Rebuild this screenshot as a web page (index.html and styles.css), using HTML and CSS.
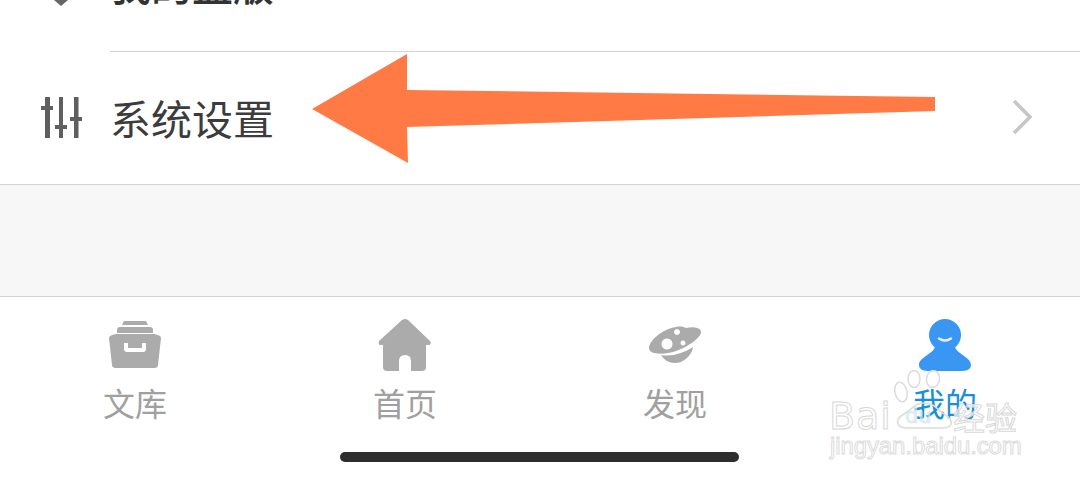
FILE: index.html
```html
<!DOCTYPE html>
<html lang="zh">
<head>
<meta charset="utf-8">
<title>系统设置</title>
<link rel="stylesheet" href="styles.css">
</head>
<body>
<div class="page">
  <main class="list">
    <div class="row row-clipped">
      <div class="row-icon"><svg class="clip-icon" width="24" height="10" viewBox="0 0 24 10"><path d="M5 0h14l-7 6z" fill="#666"/></svg></div>
      <div class="row-main row-main-top">
        <span class="row-label row-label-clipped">我的盗版</span>
      </div>
    </div>
    <div class="row row-settings">
      <div class="row-icon">
        <svg width="42" height="41" viewBox="0 0 42 41">
          <g fill="#5f5f5f">
            <rect x="4" y="0" width="5" height="41"/><rect x="0" y="9" width="12" height="4"/>
            <rect x="18" y="0" width="4" height="41"/><rect x="14" y="28" width="12" height="4"/>
            <rect x="33" y="0" width="4.500" height="41"/><rect x="29" y="20" width="12" height="4"/>
          </g>
        </svg>
      </div>
      <div class="row-main">
        <span class="row-label">系统设置</span>
        <svg class="chevron" width="22" height="36" viewBox="0 0 22 36"><path d="M3 2l16 16L3 34" fill="none" stroke="#c6c6c6" stroke-width="3.500"/></svg>
      </div>
    </div>
  </main>
  <div class="spacer"></div>
  <nav class="tabbar">
    <div class="tabs">
      <div class="tab">
        <svg width="54" height="50" viewBox="0 0 54 50"><g fill="#ababab">
          <path d="M15 4q0-2 2-2h20q2 0 2 2l1 2H14z"/>
          <path d="M9 11q0-3 3-3h30q3 0 3 3v3H9z"/>
          <path fill-rule="evenodd" d="M1 19q0-2 3-3l4-1h38l4 1q3 1 3 3l-3 27q0 3-4 3H8q-4 0-4-3zM16 24v6q0 3 3 3h16q3 0 3-3v-6h-4v5H20v-5z"/>
        </g></svg>
        <span>文库</span>
      </div>
      <div class="tab">
        <svg width="54" height="54" viewBox="0 0 54 54"><path fill="#ababab" d="M24 1q3-2 6 0l22 21q2 3-1 4h-3v22q0 4-4 4H33V42q0-6-6-6t-6 6v10H9q-4 0-4-4V26H2q-2 0-1-4z"/></svg>
        <span>首页</span>
      </div>
      <div class="tab">
        <svg width="54" height="45" viewBox="0 -7 54 45"><g fill="#ababab">
          <path fill-rule="evenodd" d="M1 22C1 15 14 3 28 1c5-1 8 0 10 1 8-2 16 0 15 5-1 5-13 14-25 18C16 29 1 29 1 22zM19 12.500a5.500 5.500 0 1 0 .01 0zM29 3a3 3 0 1 0 .01 0zM35 14.500a2.500 2.500 0 1 0 .01 0z"/>
          <path d="M13 29c11 2 23-2 32-8-1 8-9 16-18 16-6 0-11-3-14-8z"/>
        </g></svg>
        <span>发现</span>
      </div>
      <div class="tab tab-active">
        <svg width="54" height="54" viewBox="0 0 54 54">
          <circle cx="27" cy="16" r="16" fill="#3a96f3"/>
          <path fill="#3a96f3" d="M17 28C14 36 1 38 1 46c0 5 5 6 11 6h30c6 0 11-1 11-6 0-8-13-10-16-18z"/>
          <path fill="none" stroke="#e4f1ff" stroke-width="2.500" stroke-linecap="round" d="M21 19.500q6 4 12 0"/>
        </svg>
        <span>我的</span>
      </div>
    </div>
    <div class="home-indicator"></div>
  </nav>
  <svg class="arrow" width="640" height="120" viewBox="0 0 640 120"><path fill="#ff7a45" d="M2 55 97 0v36l528 7v14L97 73l1 36z"/></svg>
  <div class="watermark">
    <svg class="paw" width="62" height="60" viewBox="0 0 62 60"><g fill="none" stroke="#dcdcdc" stroke-width="1.500">
      <ellipse cx="7" cy="22" rx="6" ry="10" transform="rotate(-12 7 22)"/>
      <ellipse cx="20" cy="9" rx="6" ry="8.500"/>
      <ellipse cx="39" cy="9" rx="6.500" ry="8.500" transform="rotate(6 39 9)"/>
      <path d="M30 33c10 0 14 7 20 11 10 6 10 14-2 14H14C2 58 0 50 10 44c8-4 10-11 20-11z"/>
    </g></svg>
    <div class="wm-bai">Bai</div>
    <div class="wm-du">du</div>
    <div class="wm-cn">经验</div>
    <div class="wm-url">jingyan.baidu.com</div>
  </div>
</div>
</body>
</html>
```
FILE: styles.css
```css
* { box-sizing: border-box; }
html, body { margin: 0; padding: 0; background: #fff; }
body { font-family: "Noto Sans CJK SC", "Liberation Sans", sans-serif; }
.page { position: relative; width: 1080px; height: 483px; overflow: hidden; display: flex; flex-direction: column; background: #fff; }
.list { display: flex; flex-direction: column; border-bottom: 1px solid #d2d2d2; height: 185px; flex: none; }
.row { display: flex; }
.row-clipped { height: 52px; overflow: hidden; }
.clip-icon { display: block; margin: 0 0 0 8px; }
.row-icon { width: 110px; flex: none; padding-left: 41px; }
.row-main { flex: 1; display: flex; align-items: center; justify-content: space-between; padding-right: 47px; }
.row-main-top { border-bottom: 1px solid #d2d2d2; align-items: flex-start; }
.row-label { font-size: 41px; line-height: 48px; color: #3c3c3c; }
.row-label-clipped { margin-top: -41px; font-weight: 500; color: #333; }
.row-settings { height: 132px; align-items: center; }
.row-settings .row-main { align-self: stretch; }
.row-settings .row-icon { height: 41px; margin-top: -2px; }
.row-settings .row-label { margin-top: -3px; }
.chevron { display: block; margin-top: -2px; }
.spacer { height: 111px; background: #f7f7f7; flex: none; }
.tabbar { flex: 1; border-top: 1px solid #d2d2d2; display: flex; flex-direction: column; }
.tabs { display: grid; grid-template-columns: repeat(4, 270px); width: 1080px; height: 155px; }
.tab { display: flex; flex-direction: column; align-items: center; height: 122px; padding-top: 22px; color: #a0a0a0; font-size: 32px; line-height: 40px; position: relative; }
.tab svg { display: block; flex: none; }
.tab span { position: absolute; top: 85px; left: 0; right: 0; text-align: center; }
.tab-active { color: #1c8fd6; }
.home-indicator { width: 399px; height: 10px; border-radius: 5px; background: #2e2e2e; margin-left: 340px; }
.arrow { position: absolute; left: 310px; top: 54px; }
.watermark { position: absolute; left: 829px; top: 366px; width: 200px; height: 100px; }
.paw { position: absolute; left: 65px; top: 4px; }
.wm-bai { position: absolute; left: 0; top: 28px; font-family: "DejaVu Sans", sans-serif; font-size: 38px; line-height: 44px; letter-spacing: 1px; color: rgba(255,255,255,.6); -webkit-text-stroke: 1px #d8d8d8; }
.wm-du { position: absolute; left: 76px; top: 37px; font-family: "DejaVu Sans", sans-serif; font-size: 21px; line-height: 26px; color: rgba(200,235,255,.6); -webkit-text-stroke: .6px #d8e4ea; }
.wm-cn { position: absolute; left: 124px; top: 30px; font-size: 32px; line-height: 40px; color: rgba(255,255,255,.7); -webkit-text-stroke: 1px #d8d8d8; }
.wm-url { position: absolute; left: 1px; top: 66px; font-family: "Liberation Sans", sans-serif; font-size: 24px; line-height: 28px; color: #fff; -webkit-text-stroke: 1px #dcdcdc; letter-spacing: -.1px; }
```
